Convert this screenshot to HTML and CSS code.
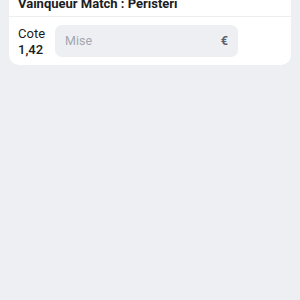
FILE: index.html
```html
<!DOCTYPE html>
<html lang="fr">
<head>
<meta charset="utf-8">
<link rel="stylesheet" href="styles.css">
</head>
<body>
<div class="card">
  <div class="card-head">Vainqueur Match : Peristeri</div>
  <div class="card-row">
    <div class="odds">
      <span class="odds-label">Cote</span>
      <span class="odds-value">1,42</span>
    </div>
    <div class="stake">
      <span class="placeholder">Mise</span>
      <span class="currency">€</span>
    </div>
  </div>
</div>
</body>
</html>
```
FILE: styles.css
```css
html, body {
  margin: 0;
  padding: 0;
  background: #eeeff3;
  font-family: Roboto, "Noto Sans", sans-serif;
  color: #1b1d22;
}
.card {
  margin: -12px 9px 0;
  background: #ffffff;
  border-radius: 10px;
}
.card-head {
  padding: 9px 9px 5px;
  font-size: 13px;
  font-weight: 700;
  line-height: 14px;
  border-bottom: 1px solid #eceef1;
}
.card-row {
  display: flex;
  align-items: center;
  padding: 6px 53px 7px 9px;
}
.odds {
  display: flex;
  flex-direction: column;
  width: 37px;
  font-size: 13px;
  line-height: 16px;
  padding-top: 3px;
}
.odds-label {
  font-weight: 400;
}
.odds-value {
  font-weight: 500;
}
.stake {
  flex: 1;
  height: 32px;
  display: flex;
  align-items: center;
  justify-content: space-between;
  padding: 0 10px;
  background: #eeeff3;
  border-radius: 7px;
  font-size: 12.5px;
}
.placeholder {
  color: #a3a7b1;
}
.currency {
  color: #5d626d;
  font-weight: 700;
}
```
